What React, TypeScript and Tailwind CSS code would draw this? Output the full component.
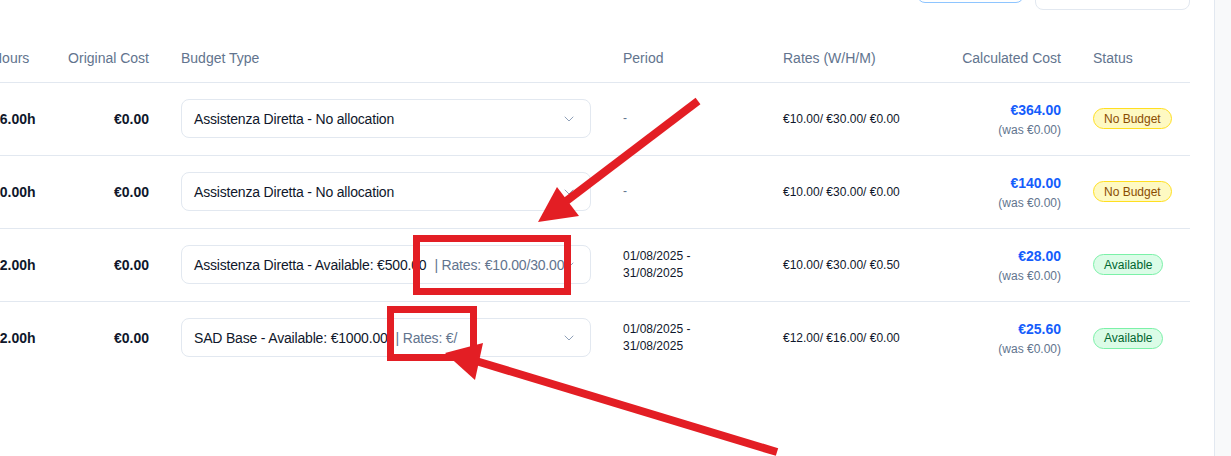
import { ChevronDown } from "lucide-react";
import { FC } from "react";

interface IRow {
  hours: string;
  cost: string;
  budget: string;
  rates?: string;
  period?: [string, string];
  rateText: string;
  calc: string;
  status: "none" | "ok";
}

const rows: IRow[] = [
  {
    hours: "16.00h",
    cost: "€0.00",
    budget: "Assistenza Diretta - No allocation",
    rateText: "€10.00/ €30.00/ €0.00",
    calc: "€364.00",
    status: "none",
  },
  {
    hours: "10.00h",
    cost: "€0.00",
    budget: "Assistenza Diretta - No allocation",
    rateText: "€10.00/ €30.00/ €0.00",
    calc: "€140.00",
    status: "none",
  },
  {
    hours: "12.00h",
    cost: "€0.00",
    budget: "Assistenza Diretta - Available: €500.00",
    rates: "| Rates: €10.00/30.00",
    period: ["01/08/2025 -", "31/08/2025"],
    rateText: "€10.00/ €30.00/ €0.50",
    calc: "€28.00",
    status: "ok",
  },
  {
    hours: "12.00h",
    cost: "€0.00",
    budget: "SAD Base - Available: €1000.00",
    rates: "| Rates: €/",
    period: ["01/08/2025 -", "31/08/2025"],
    rateText: "€12.00/ €16.00/ €0.00",
    calc: "€25.60",
    status: "ok",
  },
];

const BudgetSelect: FC<{ label: string; rates?: string }> = ({ label, rates }) => (
  <div className="flex items-center h-[39px] w-[410px] rounded-lg border border-slate-200 bg-white pl-3 pr-[13px] text-sm text-slate-900">
    <span className="flex-1 min-w-0 whitespace-nowrap tracking-[-0.18px]">
      {label}
      {rates && <span className="ml-2 text-slate-500">{rates}</span>}
    </span>
    <ChevronDown className="w-4 h-4 shrink-0 text-slate-400" strokeWidth={1.5} />
  </div>
);

const StatusBadge: FC<{ status: IRow["status"] }> = ({ status }) =>
  status === "none" ? (
    <span className="inline-flex items-center h-[21px] px-2.5 rounded-full border border-yellow-300 bg-yellow-100 text-xs font-medium text-yellow-800 whitespace-nowrap">
      No Budget
    </span>
  ) : (
    <span className="inline-flex items-center h-[21px] px-2.5 rounded-full border border-green-300 bg-green-100 text-xs font-medium text-green-800 whitespace-nowrap">
      Available
    </span>
  );

const Annotations = () => (
  <svg
    className="absolute inset-0 pointer-events-none"
    width="1231"
    height="456"
    viewBox="0 0 1231 456"
  >
    <g fill="none" stroke="#e31e24" strokeWidth="7">
      <rect x="416.5" y="238.5" width="151" height="53" />
      <rect x="390.5" y="309.5" width="83" height="48" />
    </g>
    <g stroke="#e31e24" strokeWidth="8" strokeLinecap="butt">
      <line x1="698" y1="101" x2="565" y2="202" />
      <line x1="777" y1="452" x2="476" y2="361" />
    </g>
    <g fill="#e31e24">
      <polygon points="538,222 557,187 579,216" />
      <polygon points="445,353 483,343 475,380" />
    </g>
  </svg>
);

export default function App() {
  return (
    <div className="relative flex w-[1231px] h-[456px] overflow-hidden bg-white font-['Liberation_Sans',Arial,sans-serif]">
      <div className="w-[1214px] shrink-0 overflow-hidden">
        <div className="flex justify-end items-end gap-[11px] h-[10px] pr-[24px]">
          <div className="w-[107px] h-[40px] mb-[7px] shrink-0 rounded-lg border border-blue-300 bg-white" />
          <div className="w-[155px] h-[40px] shrink-0 rounded-lg border border-slate-200 bg-white" />
        </div>
        <table className="mt-[24px] -ml-[24px] w-[1214px] table-fixed border-collapse text-sm">
          <colgroup>
            <col className="w-[74px]" />
            <col className="w-[115px]" />
            <col className="w-[442px]" />
            <col className="w-[160px]" />
            <col className="w-[170px]" />
            <col className="w-[140px]" />
            <col className="w-[113px]" />
          </colgroup>
          <thead>
            <tr className="h-[48px] border-b border-slate-200 text-slate-500">
              <th className="px-4 text-left font-medium whitespace-nowrap">Hours</th>
              <th className="px-4 text-right font-medium whitespace-nowrap">Original Cost</th>
              <th className="px-4 text-left font-medium">Budget Type</th>
              <th className="px-4 text-left font-medium">Period</th>
              <th className="px-4 text-left font-medium whitespace-nowrap">Rates (W/H/M)</th>
              <th className="px-4 text-right font-medium whitespace-nowrap">Calculated Cost</th>
              <th className="px-4 text-left font-medium">Status</th>
            </tr>
          </thead>
          <tbody>
            {rows.map((row, i) => (
              <tr key={i} className="h-[73px] border-b border-slate-200 last:border-0">
                <td className="px-4 font-semibold text-slate-900 whitespace-nowrap">{row.hours}</td>
                <td className="px-4 text-right font-semibold text-slate-900">{row.cost}</td>
                <td className="px-4">
                  <BudgetSelect label={row.budget} rates={row.rates} />
                </td>
                <td className="px-4 text-xs leading-[17px]">
                  {row.period ? (
                    <div className="text-slate-900">
                      <div>{row.period[0]}</div>
                      <div>{row.period[1]}</div>
                    </div>
                  ) : (
                    <span className="text-slate-500">-</span>
                  )}
                </td>
                <td className="px-4 text-xs text-slate-900 whitespace-nowrap">{row.rateText}</td>
                <td className="px-4 text-right">
                  <div className="font-semibold text-blue-600">{row.calc}</div>
                  <div className="mt-[2px] text-xs text-slate-500">(was €0.00)</div>
                </td>
                <td className="px-4">
                  <StatusBadge status={row.status} />
                </td>
              </tr>
            ))}
          </tbody>
        </table>
      </div>
      <div className="flex-1 border-l border-slate-200 bg-[#f8f9fa]" />
      <Annotations />
    </div>
  );
}
